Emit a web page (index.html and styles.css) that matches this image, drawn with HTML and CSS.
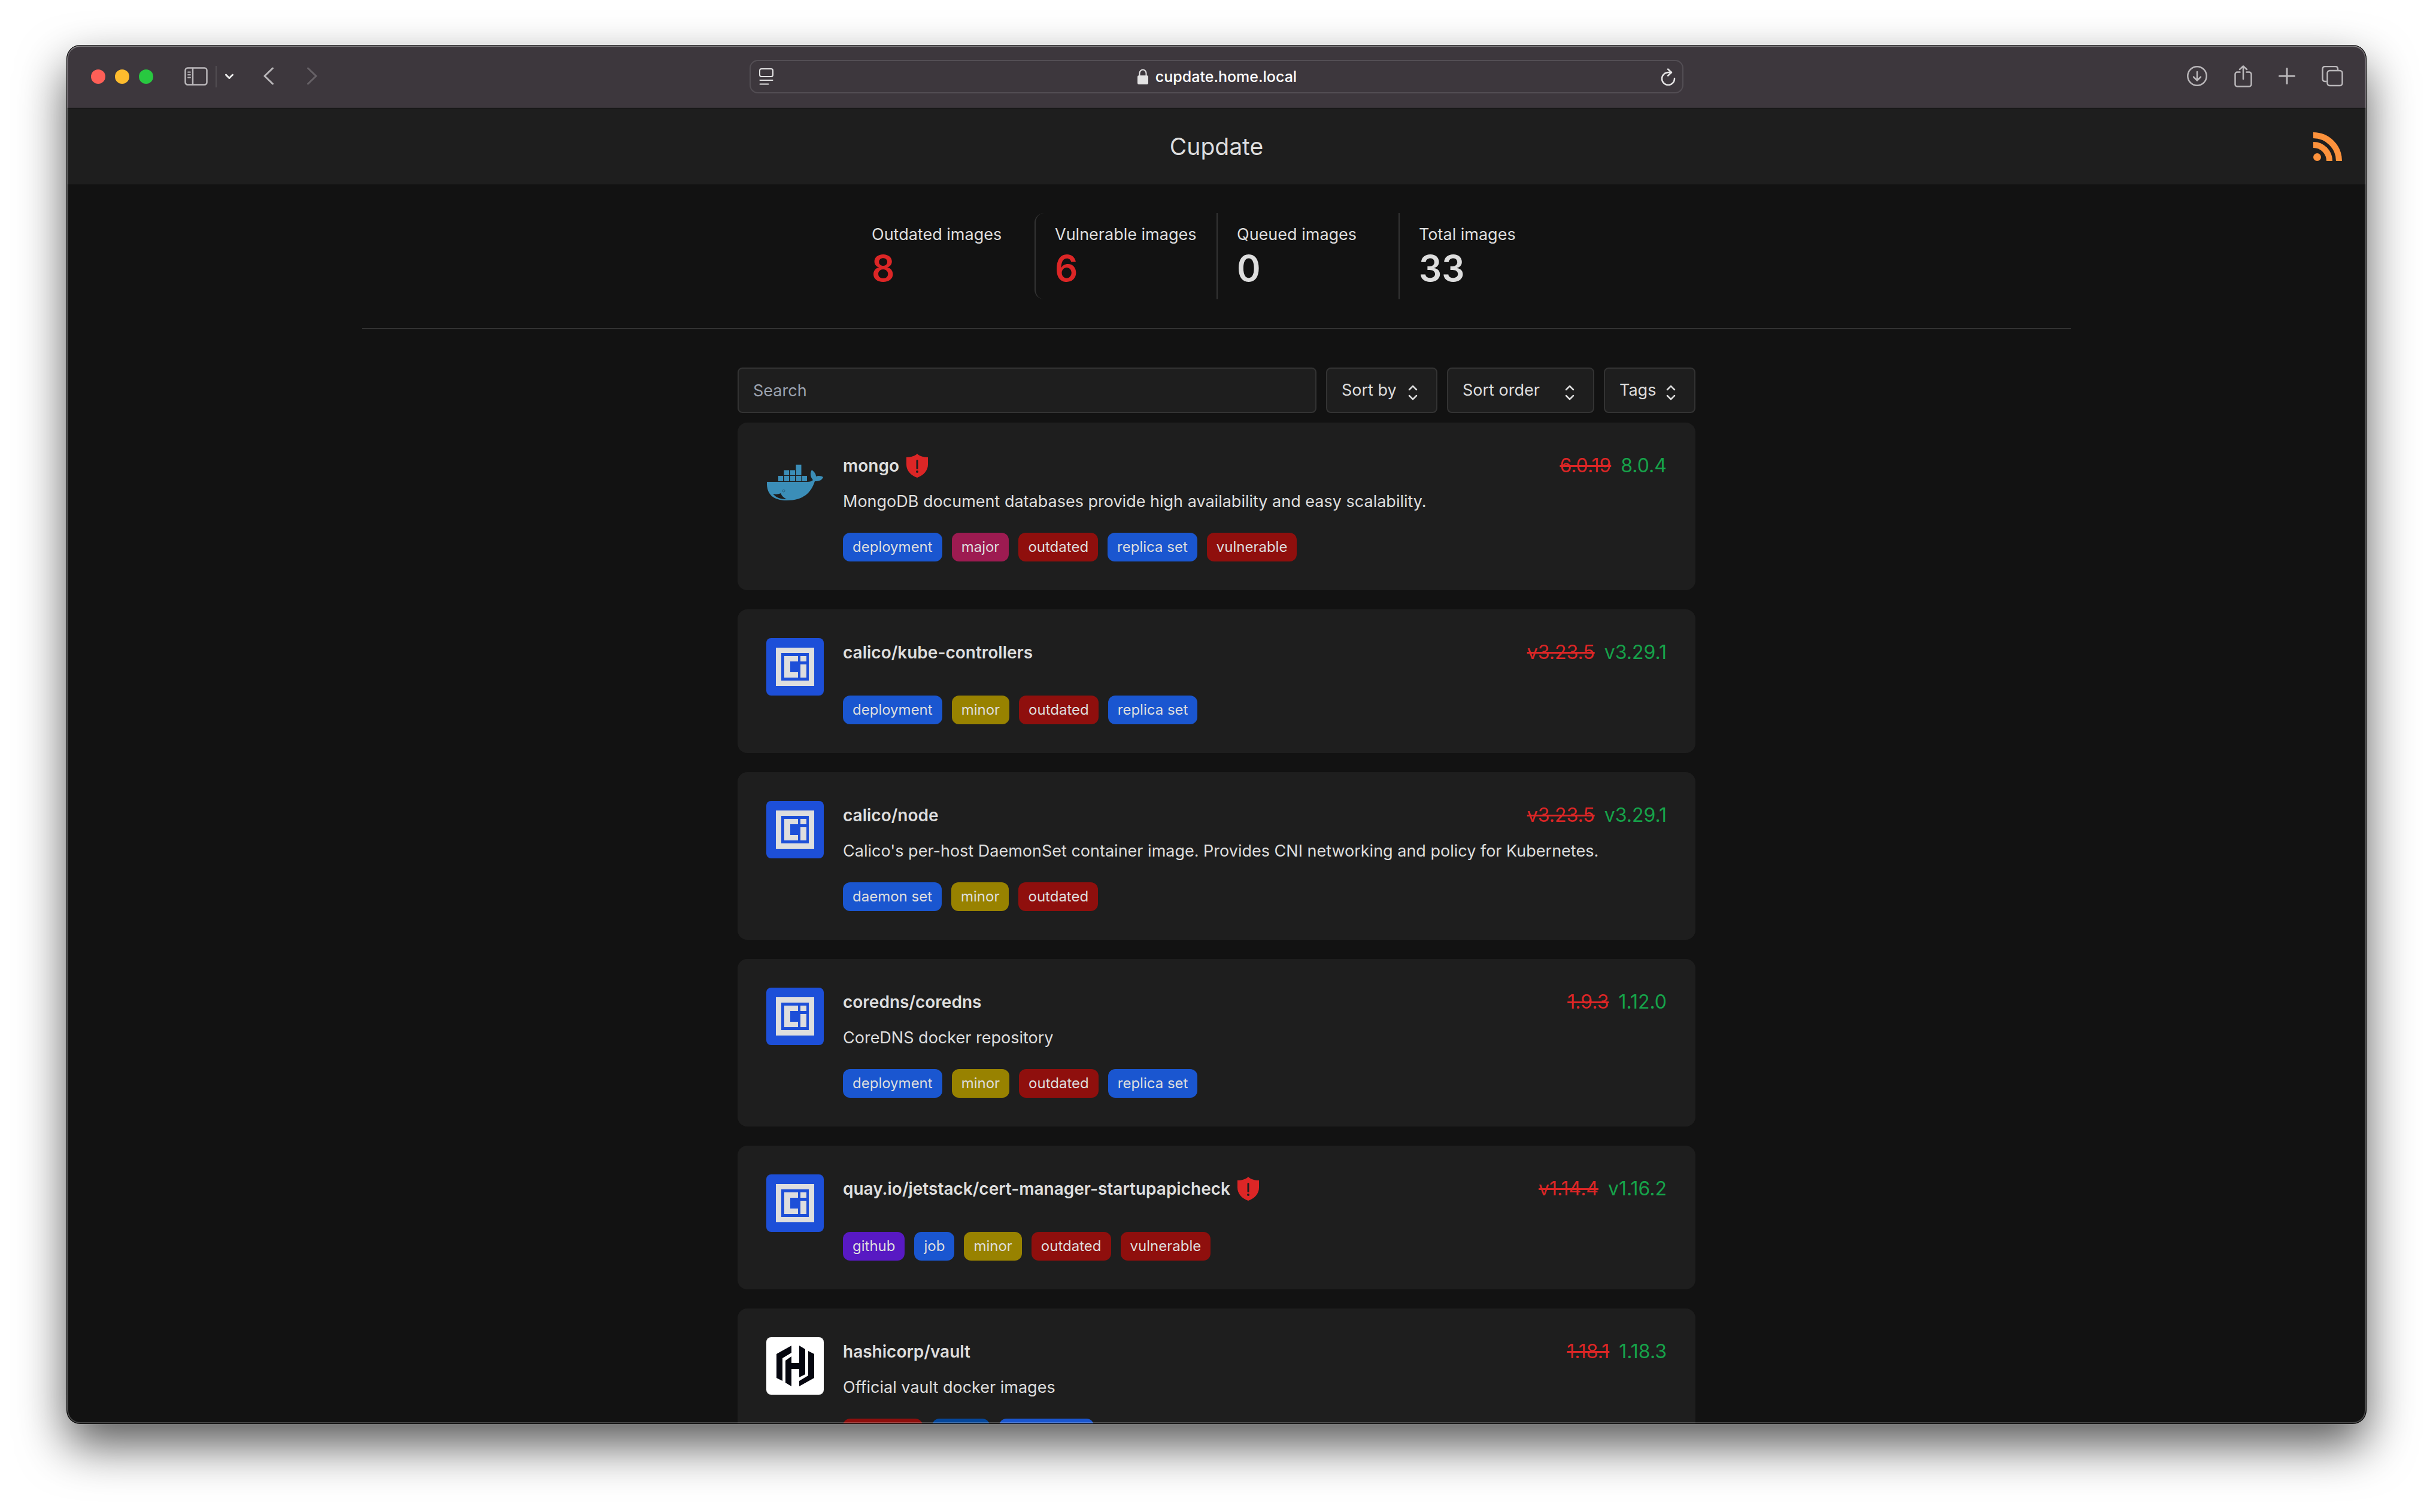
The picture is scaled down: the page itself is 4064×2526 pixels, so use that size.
FILE: index.html
```html
<!DOCTYPE html>
<html lang="en">
<head>
<meta charset="utf-8">
<title>Cupdate</title>
<link rel="stylesheet" href="styles.css">
</head>
<body>
<svg class="defs" aria-hidden="true">
  <symbol id="shield" viewBox="0 0 36 40"><path fill="currentColor" fill-rule="evenodd" d="M18 0C14 4 7 6 0 6v12c0 10 7 18 18 22 11-4 18-12 18-22V6C29 6 22 4 18 0zM16.500 11.500a1.500 1.500 0 0 1 3 0v13a1.500 1.500 0 0 1-3 0zM18 28a2 2 0 1 1 0 4 2 2 0 0 1 0-4z"/></symbol>
  <symbol id="updown" viewBox="0 0 16 26"><path fill="none" stroke="currentColor" stroke-width="2.500" stroke-linecap="round" stroke-linejoin="round" d="M2 8l6-6 6 6M2 18l6 6 6-6"/></symbol>
  <symbol id="oci" viewBox="0 0 96 96"><rect width="96" height="96" fill="#1d4fd8"/><path fill="#dedede" fill-rule="evenodd" d="M16 16h64v64H16zM25 25v46h46V25z"/><path fill="#dedede" d="M30 30h23v9H40v18h13v9H30zM57 30h10v9H57zM57 44h10v22H57z"/></symbol>
</svg>

<div class="window">
  <div class="toolbar">
    <div class="tools">
      <div class="lights"><span class="light red"></span><span class="light yellow"></span><span class="light green"></span></div>
      <button class="tool sidebar" aria-label="Sidebar"><svg width="40" height="32" viewBox="0 0 40 32" fill="none" stroke="currentColor" stroke-linecap="round"><rect x="1.500" y="1.500" width="36" height="28" rx="4" stroke-width="2.500"/><path stroke-width="2.500" d="M14 2v27"/><path stroke-width="1.800" d="M6 8.500h4M6 13h4M6 17.500h4"/></svg></button>
      <span class="split"></span>
      <button class="tool more" aria-label="Tab groups"><svg width="14" height="10" viewBox="0 0 14 10" fill="none" stroke="#ececec" stroke-width="3" stroke-linecap="round" stroke-linejoin="round"><path d="M1.500 2L7 7.500 12.500 2"/></svg></button>
      <button class="tool back" aria-label="Back"><svg width="18" height="32" viewBox="0 0 18 32" fill="none" stroke="currentColor" stroke-width="3" stroke-linecap="round" stroke-linejoin="round"><path d="M15.500 2L2 15l13.500 13"/></svg></button>
      <button class="tool forward" aria-label="Forward" disabled><svg width="18" height="32" viewBox="0 0 18 32" fill="none" stroke="currentColor" stroke-width="3" stroke-linecap="round" stroke-linejoin="round"><path d="M2.500 2L16 15 2.500 28"/></svg></button>
    </div>
    <div class="address">
      <svg class="reader" width="24" height="30" viewBox="0 0 24 30" fill="none" stroke="#e4e3e4" stroke-width="2" stroke-linecap="round"><rect x="1" y="2" width="22" height="13" rx="3"/><path d="M1.500 21h21M1.500 27.500h14"/></svg>
      <div class="site"><svg width="18" height="26" viewBox="0 0 18 26"><path fill="none" stroke="#e4e3e4" stroke-width="2" d="M3.500 12V7.500a5.500 6 0 0 1 11 0V12"/><rect y="11" width="18" height="15" rx="2.500" fill="#e4e3e4"/></svg><span>cupdate.home.local</span></div>
      <button class="tool reload" aria-label="Reload"><svg width="26" height="30" viewBox="0 0 26 30" fill="none" stroke="#e4e3e4" stroke-width="2.500" stroke-linecap="round" stroke-linejoin="round"><path d="M17 8h-4A10.500 10.500 0 1 0 23 18M12 2.500l6 5.500-6 5.500"/></svg></button>
    </div>
    <div class="tools right">
      <button class="tool" aria-label="Downloads"><svg width="36" height="36" viewBox="0 0 36 36" fill="none" stroke="currentColor" stroke-width="2.500" stroke-linecap="round" stroke-linejoin="round"><circle cx="18" cy="17" r="15.700"/><path d="M18 10v14M12 18.500l6 6 6-6"/></svg></button>
      <button class="tool" aria-label="Share"><svg width="30" height="38" viewBox="0 0 30 38" fill="none" stroke="currentColor" stroke-width="2.500" stroke-linecap="round" stroke-linejoin="round"><path d="M9.500 11.500H5a3.500 3.500 0 0 0-3.500 3.500v17A3.500 3.500 0 0 0 5 35.500h20a3.500 3.500 0 0 0 3.500-3.500V15a3.500 3.500 0 0 0-3.500-3.500h-4.500M15 23V1.500M9 7l6-5.500L21 7"/></svg></button>
      <button class="tool" aria-label="New tab"><svg width="28" height="30" viewBox="0 0 28 30" fill="none" stroke="currentColor" stroke-width="3" stroke-linecap="round"><path d="M14 1.500v25M1.500 14h25"/></svg></button>
      <button class="tool" aria-label="All tabs"><svg width="36" height="36" viewBox="0 0 36 36" fill="none" stroke="currentColor" stroke-width="2.500"><path d="M8.500 26H5.500a4 4 0 0 1-4-4V5a4 4 0 0 1 4-4H23a4 4 0 0 1 4 4v3"/><rect x="9.500" y="8" width="25" height="25" rx="4"/></svg></button>
    </div>
  </div>

  <header class="header">
    <h1 class="title">Cupdate</h1>
    <a class="feed" href="#feed" aria-label="RSS feed"><svg width="48" height="48" viewBox="0 0 48 48" fill="none" stroke="#fd923c" stroke-width="10"><circle cx="6.500" cy="41.500" r="6.500" fill="#fd923c" stroke="none"/><path d="M0 21a27 27 0 0 1 27 27M0 5a43 43 0 0 1 43 43"/></svg></a>
  </header>

  <main class="page">
    <div class="stats">
      <div class="stat"><div class="stat-name">Outdated images</div><div class="stat-value alert">8</div></div>
      <div class="stat active"><div class="stat-name">Vulnerable images</div><div class="stat-value alert">6</div></div>
      <div class="stat"><div class="stat-name">Queued images</div><div class="stat-value">0</div></div>
      <div class="stat"><div class="stat-name">Total images</div><div class="stat-value">33</div></div>
    </div>
    <hr class="rule">

    <div class="content">
      <form class="filters">
        <input class="field search" type="search" placeholder="Search" aria-label="Search">
        <div class="picker"><select class="field sort-by" aria-label="Sort by"><option>Sort by</option><option>Name</option></select><svg width="16" height="26"><use href="#updown"/></svg></div>
        <div class="picker"><select class="field sort-order" aria-label="Sort order"><option>Sort order</option><option>Ascending</option></select><svg width="16" height="26"><use href="#updown"/></svg></div>
        <div class="picker"><select class="field tags-filter" aria-label="Tags"><option>Tags</option><option>minor</option></select><svg width="16" height="26"><use href="#updown"/></svg></div>
      </form>

      <div class="cards">
        <article class="card">
          <svg class="logo" viewBox="0 0 96 96"><g fill="#3b8eb8"><path d="M20 41h8v9h-8zM29.500 41h8.500v9h-8.500zM39.500 41h8.500v9h-8.500zM49.500 41h9v9h-9zM60 41h8v9h-8zM29.500 31.500h8.500v8.500h-8.500zM39.500 31.500h8.500v8.500h-8.500zM49.500 22.500h9v17.500h-9z"/><path fill-rule="evenodd" d="M1 51h68c4 0 7-1 9-3-5-6-5-12-2-17 5 4 7 7 7 11 4-2 9-1 12 1-2 5-6 7-14 7C75 69 62 82 34 82 12 82 0 72 1 51zM11 71c5 6 12 9 23 9-4-2-8-5-10-10-4 2-9 2-13 1z"/></g><circle cx="29" cy="66" r="2" fill="none" stroke="#28607c"/></svg>
          <div class="info">
            <div class="head"><h2 class="name">mongo</h2><svg class="shield" width="36" height="40"><use href="#shield"/></svg><div class="versions"><del>6.0.19</del><span>8.0.4</span></div></div>
            <p class="desc">MongoDB document databases provide high availability and easy scalability.</p>
            <div class="tags"><span class="tag blue">deployment</span><span class="tag pink">major</span><span class="tag dark-red">outdated</span><span class="tag blue">replica set</span><span class="tag dark-red">vulnerable</span></div>
          </div>
        </article>
        <article class="card">
          <svg class="logo"><use href="#oci"/></svg>
          <div class="info">
            <div class="head"><h2 class="name">calico/kube-controllers</h2><div class="versions"><del>v3.23.5</del><span>v3.29.1</span></div></div>
            <div class="tags"><span class="tag blue">deployment</span><span class="tag gold">minor</span><span class="tag dark-red">outdated</span><span class="tag blue">replica set</span></div>
          </div>
        </article>
        <article class="card">
          <svg class="logo"><use href="#oci"/></svg>
          <div class="info">
            <div class="head"><h2 class="name">calico/node</h2><div class="versions"><del>v3.23.5</del><span>v3.29.1</span></div></div>
            <p class="desc">Calico's per-host DaemonSet container image. Provides CNI networking and policy for Kubernetes.</p>
            <div class="tags"><span class="tag blue">daemon set</span><span class="tag gold">minor</span><span class="tag dark-red">outdated</span></div>
          </div>
        </article>
        <article class="card">
          <svg class="logo"><use href="#oci"/></svg>
          <div class="info">
            <div class="head"><h2 class="name">coredns/coredns</h2><div class="versions"><del>1.9.3</del><span>1.12.0</span></div></div>
            <p class="desc">CoreDNS docker repository</p>
            <div class="tags"><span class="tag blue">deployment</span><span class="tag gold">minor</span><span class="tag dark-red">outdated</span><span class="tag blue">replica set</span></div>
          </div>
        </article>
        <article class="card">
          <svg class="logo"><use href="#oci"/></svg>
          <div class="info">
            <div class="head"><h2 class="name">quay.io/jetstack/cert-manager-startupapicheck</h2><svg class="shield" width="36" height="40"><use href="#shield"/></svg><div class="versions"><del>v1.14.4</del><span>v1.16.2</span></div></div>
            <div class="tags"><span class="tag purple">github</span><span class="tag blue">job</span><span class="tag gold">minor</span><span class="tag dark-red">outdated</span><span class="tag dark-red">vulnerable</span></div>
          </div>
        </article>
        <article class="card">
          <svg class="logo" viewBox="0 0 96 96"><rect width="96" height="96" fill="#fff"/><path fill="#05060f" d="M42 14v12L27 35v38l-10-5V28zM55 14l10 6v42l-10 5V53H42v29l-10-6V39l10-7v11h13zM70 23l10 5v40L55 82V73l15-9z"/></svg>
          <div class="info">
            <div class="head"><h2 class="name">hashicorp/vault</h2><div class="versions"><del>1.18.1</del><span>1.18.3</span></div></div>
            <p class="desc">Official vault docker images</p>
            <div class="tags"><span class="tag dark-red">outdated</span><span class="tag navy">patch</span><span class="tag blue">stateful set</span></div>
          </div>
        </article>
      </div>
    </div>
  </main>
</div>
</body>
</html>
```

FILE: styles.css
```css
* { box-sizing: border-box; }

body {
  margin: 0;
  height: 100vh;
  padding: 76px 112px 148px;
  background: #fff;
  color: #dedede;
  font-family: Inter, "Liberation Sans", sans-serif;
  font-size: 27px;
  line-height: 40px;
  overflow: hidden;
}

h1, h2, p { margin: 0; }
button { border: 0; padding: 0; background: none; color: inherit; font: inherit; }
svg { display: block; flex: none; }
.defs { display: none; }

.window {
  position: relative;
  height: 100%;
  overflow: hidden;
  border-radius: 22px;
  background: #121212;
  box-shadow: 0 0 0 1px #000, 0 36px 80px rgba(0, 0, 0, .66);
}

/* Light rim that lies over the window's content */
.window::after {
  content: "";
  position: absolute;
  inset: 0;
  border: 2px solid rgba(255, 255, 255, .24);
  border-top-color: rgba(255, 255, 255, .38);
  border-radius: 22px;
  pointer-events: none;
}

.toolbar {
  display: grid;
  grid-template-columns: 1fr 1560px 1fr;
  align-items: center;
  height: 105px;
  border-bottom: 1px solid #000;
  background: #3d373d;
  color: #bab7ba;
}

.tools { display: flex; align-items: center; padding-left: 40px; }
.tools.right { justify-content: flex-end; gap: 44px; padding: 0 38px 0 0; }
.lights { display: flex; gap: 16px; margin-right: 52px; }
.light { width: 24px; height: 24px; border-radius: 50%; }
.red { background: #ff5f57; }
.yellow { background: #febc2e; }
.green { background: #28c840; }
.split { width: 2px; height: 36px; margin: 0 14px 0 12px; background: #514c51; }
.back { margin-left: 50px; }
.forward { margin-left: 54px; color: #676267; }

.address {
  display: flex;
  align-items: center;
  justify-content: space-between;
  height: 56px;
  padding: 0 10px 0 14px;
  border: 2px solid #534e54;
  border-radius: 14px;
}

.site {
  display: flex;
  align-items: center;
  gap: 12px;
  color: #fff;
  font-size: 25px;
  font-weight: 500;
}

.header {
  display: grid;
  grid-template-columns: 1fr auto 1fr;
  align-items: center;
  height: 127px;
  padding: 0 40px;
  background: #1e1e1e;
}

.title { grid-column: 2; font-size: 39px; font-weight: 400; line-height: 56px; }
.feed { justify-self: end; }

.page { padding-top: 48px; }

.stats {
  display: grid;
  grid-template-columns: repeat(4, 304px);
  justify-content: center;
}

.stat { padding: 16px 32px; border-left: 2px solid #333; white-space: nowrap; }
.stat:first-child { border-left: 0; }
.active { border-radius: 16px; }
.stat-value { font-size: 60px; font-weight: 600; line-height: 72px; }
.alert { color: #dc2626; }

.rule {
  width: 2854px;
  max-width: 90%;
  height: 2px;
  margin: 48px auto 64px;
  border: 0;
  background: #333;
}

.content { max-width: 1600px; margin: 0 auto; }
.filters { display: flex; gap: 16px; margin-bottom: 16px; }

.field {
  height: 76px;
  padding: 0 24px;
  border: 2px solid #333;
  border-radius: 8px;
  outline: 0;
  background: #1e1e1e;
  color: inherit;
  font: inherit;
  appearance: none;
}

.search { flex: 1; min-width: 0; }
.search::placeholder { color: #9ca3af; opacity: 1; }
.picker { position: relative; }
.picker svg { position: absolute; top: 29px; right: 33px; pointer-events: none; }
.sort-by { width: 186px; }
.sort-order { width: 246px; }
.tags-filter { width: 153px; }

.cards { display: flex; flex-direction: column; gap: 32px; }

.card {
  display: flex;
  align-items: flex-start;
  gap: 32px;
  padding: 48px;
  border-radius: 16px;
  background: #1e1e1e;
}

.logo { width: 96px; height: 96px; border-radius: 8px; }
.info { display: flex; flex-direction: column; flex: 1; min-width: 0; }
.head { display: flex; align-items: center; gap: 12px; height: 48px; margin-bottom: 16px; }
.name { font-size: 28px; font-weight: 600; line-height: 48px; }
.shield { color: #dc2626; }
.versions { display: flex; gap: 16px; margin-left: auto; color: #16a34a; font-size: 32px; line-height: 48px; }
.versions del { color: #dc2626; }
.tags { display: flex; gap: 16px; margin-top: 32px; }
.tag { padding: 0 16px; border-radius: 12px; font-size: 24px; line-height: 48px; }
.blue { background: #1a56d0; }
.pink { background: #9d1b51; }
.dark-red { background: #8f0f0d; }
.gold { background: #988200; }
.purple { background: #5819c3; }
.navy { background: #05479c; }
```
